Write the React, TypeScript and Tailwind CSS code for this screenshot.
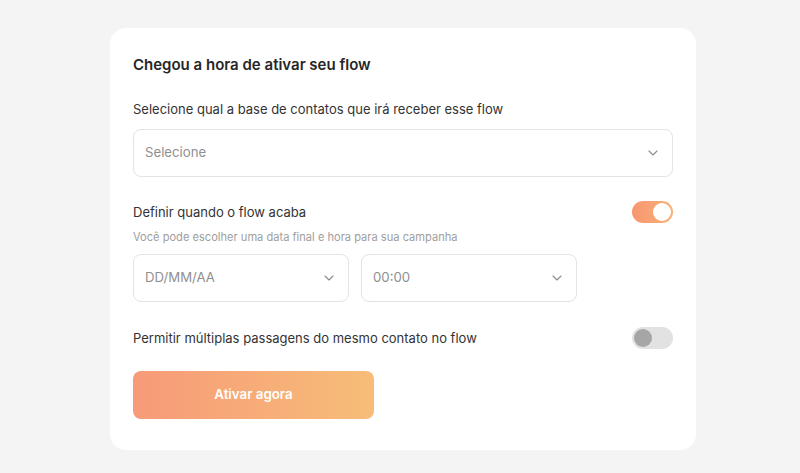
import { ChevronDown } from "lucide-react";

function SelectBox({ placeholder, className }: { placeholder: string; className: string }) {
  return (
    <div
      className={`flex h-12 items-center justify-between rounded-lg border border-[#e3e3e3] bg-white pl-[11px] pr-[11px] ${className}`}
    >
      <span className="text-[13.2px] text-[#8f8f8f]">{placeholder}</span>
      <ChevronDown className="h-4 w-4 text-[#8a8a8a]" strokeWidth={1.6} />
    </div>
  );
}

function Toggle({ on }: { on: boolean }) {
  if (on) {
    return (
      <div className="flex h-[22px] w-[41px] items-center justify-end rounded-full bg-gradient-to-r from-[#f89670] to-[#f8b27a] p-[2px]">
        <div className="h-[18px] w-[18px] rounded-full bg-white" />
      </div>
    );
  }
  return (
    <div className="flex h-[22px] w-[41px] items-center justify-start rounded-full bg-[#e2e2e2] p-[2px]">
      <div className="h-[18px] w-[18px] rounded-full bg-[#a6a6a6]" />
    </div>
  );
}

export default function App() {
  return (
    <div className="flex min-h-[473px] w-full items-start justify-center bg-[#f4f4f4] pl-[6px] pt-[28px] font-['Inter',sans-serif] text-[#2b2b2b]">
      <div className="w-[586px] rounded-2xl bg-white px-[23px] pb-[31px] pt-[28px]">
        <h1 className="text-[15px] font-semibold leading-[18px] text-[#262626]">
          Chegou a hora de ativar seu flow
        </h1>
        <p className="mt-[26px] text-[13px] leading-[18px] text-[#333]">
          Selecione qual a base de contatos que irá receber esse flow
        </p>
        <SelectBox placeholder="Selecione" className="mt-[11px] w-[540px]" />

        <div className="mt-[24px] flex w-[540px] items-center justify-between">
          <span className="text-[13px] leading-[18px] text-[#333]">Definir quando o flow acaba</span>
          <Toggle on />
        </div>
        <p className="mt-[7px] text-[11.1px] leading-[14px] text-[#9e9e9e]">
          Você pode escolher uma data final e hora para sua campanha
        </p>
        <div className="mt-[10px] flex gap-[12px]">
          <SelectBox placeholder="DD/MM/AA" className="w-[216px]" />
          <SelectBox placeholder="00:00" className="w-[216px]" />
        </div>

        <div className="mt-[25px] flex w-[540px] items-center justify-between">
          <span className="text-[13px] leading-[18px] text-[#333]">
            Permitir múltiplas passagens do mesmo contato no flow
          </span>
          <Toggle on={false} />
        </div>

        <button className="mt-[22px] flex h-12 w-[241px] items-center justify-center rounded-lg bg-gradient-to-r from-[#f79a78] to-[#f7bd78] text-[13.3px] font-semibold text-white">
          Ativar agora
        </button>
      </div>
    </div>
  );
}
